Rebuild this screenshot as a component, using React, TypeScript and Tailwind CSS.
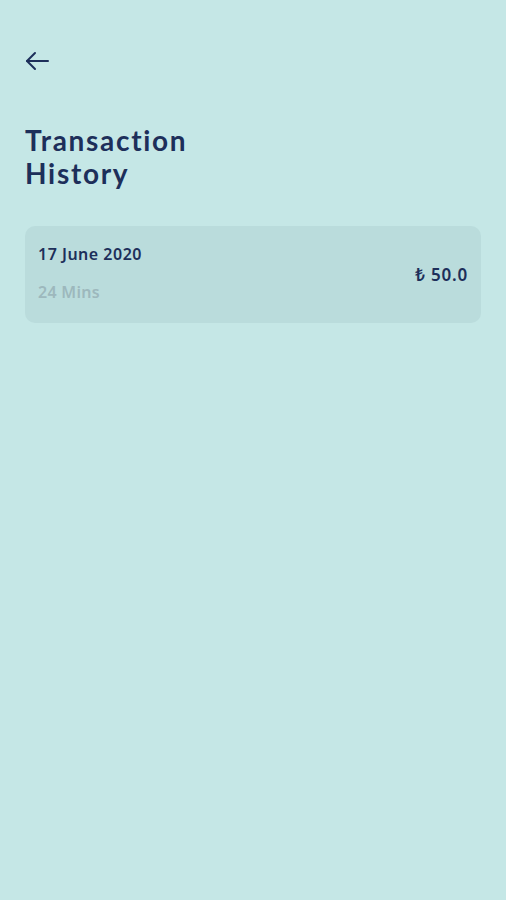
const App = () => {
  return (
    <div
      className="min-h-[900px] w-full bg-[#c5e7e6] px-[25px] pt-[48px]"
      style={{ fontFamily: '"Noto Sans", "Open Sans", sans-serif' }}
    >
      {/* Back arrow */}
      <button className="flex h-[26px] w-[26px] items-center justify-start text-[#1d2f5a]">
        <svg width="25" height="20" viewBox="0 0 25 20" fill="none" stroke="currentColor" strokeWidth="2" strokeLinecap="round" strokeLinejoin="round">
          <path d="M23 10H2" />
          <path d="M10 2L2 10L10 18" />
        </svg>
      </button>

      <h1
        className="mt-[50px] flex flex-col text-[28px] font-bold leading-[33px] tracking-[1.7px] text-[#1d2f5a]"
        style={{ fontFamily: 'Lato, "Noto Sans", sans-serif' }}
      >
        <span>Transaction</span>
        <span>History</span>
      </h1>

      {/* Transaction list */}
      <div className="mt-[36px] flex flex-col gap-3">
        <div className="flex h-[97px] items-center justify-between rounded-[10px] bg-[#badcdc] pl-[13px] pr-[13px]">
          <div className="-mt-1 flex flex-col">
            <span className="text-[16px] font-semibold leading-5 tracking-[0.5px] text-[#1d2f5a]">17 June 2020</span>
            <span className="mt-[18px] text-[16px] font-semibold leading-5 tracking-[0.3px] text-[#9db8bd]">24 Mins</span>
          </div>
          <span className="text-[17px] font-semibold tracking-[0.8px] text-[#1d2f5a]">₺ 50.0</span>
        </div>
      </div>
    </div>
  );
};

export default App;
